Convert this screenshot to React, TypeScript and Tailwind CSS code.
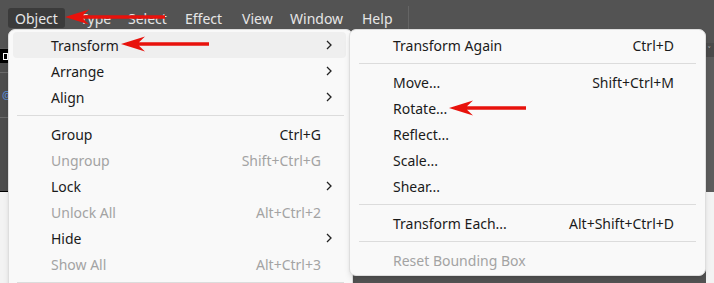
import React from "react"

type Item =
  | { sep: true }
  | { label: string; shortcut?: string; sub?: boolean; disabled?: boolean; active?: boolean; sep?: false }

const objectMenu: Item[] = [
  { label: "Transform", sub: true, active: true },
  { label: "Arrange", sub: true },
  { label: "Align", sub: true },
  { sep: true },
  { label: "Group", shortcut: "Ctrl+G" },
  { label: "Ungroup", shortcut: "Shift+Ctrl+G", disabled: true },
  { label: "Lock", sub: true },
  { label: "Unlock All", shortcut: "Alt+Ctrl+2", disabled: true },
  { label: "Hide", sub: true },
  { label: "Show All", shortcut: "Alt+Ctrl+3", disabled: true },
  { sep: true },
]

const transformMenu: Item[] = [
  { label: "Transform Again", shortcut: "Ctrl+D" },
  { sep: true },
  { label: "Move...", shortcut: "Shift+Ctrl+M" },
  { label: "Rotate..." },
  { label: "Reflect..." },
  { label: "Scale..." },
  { label: "Shear..." },
  { sep: true },
  { label: "Transform Each...", shortcut: "Alt+Shift+Ctrl+D" },
  { sep: true },
  { label: "Reset Bounding Box", disabled: true },
]

const menuBar = [
  { label: "Object", w: "w-[65px]", active: true },
  { label: "Type", w: "w-[48px]" },
  { label: "Select", w: "w-[57px]" },
  { label: "Effect", w: "w-[57px]" },
  { label: "View", w: "w-[48px]" },
  { label: "Window", w: "w-[72px]" },
  { label: "Help", w: "w-[53px]" },
]

function Chevron() {
  return (
    <svg width="6" height="10" viewBox="0 0 6 10" className="ml-auto">
      <path d="M1 1l4 4-4 4" fill="none" stroke="#222" strokeWidth="1.3" />
    </svg>
  )
}

// red annotation arrow, tip on the left
function RedArrow({ className, length }: { className: string; length: number }) {
  return (
    <svg className={`absolute z-20 ${className}`} width={length} height="16" viewBox={`0 0 ${length} 16`}>
      <path d={`M0 8 L24 0.5 L18 6.3 L${length} 6.3 L${length} 9.7 L18 9.7 L24 15.5 Z`} fill="#e8120c" />
    </svg>
  )
}

export default function App() {
  return (
    <div
      className="relative h-[283px] w-[714px] overflow-hidden bg-[#535353] text-[14px]"
      style={{ fontFamily: '"Noto Sans", "Open Sans", sans-serif' }}
    >
      {/* menu bar */}
      <div className="flex h-[29px] items-end pb-[1px] pl-2">
        {menuBar.map((m) => (
          <div key={m.label} className={`${m.w} flex`}>
            <span
              className={`flex h-[20px] items-center rounded-[3px] px-[7px] text-[#e6e6e6] ${
                m.active ? "bg-[#3b3b3b]" : ""
              }`}
            >
              {m.label}
            </span>
          </div>
        ))}
        <div className="mb-[-1px] h-[23px] w-px bg-[#656565]" />
      </div>

      <div className="flex items-start">
        {/* left strip of the workspace */}
        <div className="flex w-2 flex-col">
          <div className="h-[20px] border-b border-[#5e5e5e] bg-[#535353]" />
          <div className="flex h-[14px] items-center bg-black pl-[3px]">
            <div className="h-[7px] w-[6px] border border-white" />
          </div>
          <div className="h-[10px] border-b border-[#6a6a6a] bg-[#4d4d4d]" />
          <div className="flex h-[44px] items-center bg-[#4d4d4d] pl-[2px] text-[11px] text-[#5b8fd9]">@</div>
          <div className="h-[74px] border-t border-[#6a6a6a] bg-[#4d4d4d]" />
          <div className="h-px bg-black" />
          <div className="h-[100px] bg-[#f3f3f3]" />
        </div>

        {/* Object menu */}
        <div className="h-[270px] w-[345px] rounded-t-[7px] border border-[#dedede] bg-[#f9f9f9] pt-[2px] shadow-md">
          {objectMenu.map((it, i) =>
            it.sep ? (
              <div key={i} className="mx-[8px] my-[5px] h-px bg-[#dcdcdc]" />
            ) : (
              <div
                key={i}
                className={`ml-[4px] mr-[6px] flex h-[26px] items-center rounded-[4px] pl-[38px] pr-[14px] ${
                  it.active ? "bg-[#efefef]" : ""
                } ${it.disabled ? "text-[#a3a3a3]" : "text-[#1b1b1b]"}`}
              >
                <span className="flex-1">{it.label}</span>
                {it.shortcut && <span>{it.shortcut}</span>}
                <span className="flex w-[11px] justify-end">{it.sub && <Chevron />}</span>
              </div>
            )
          )}
        </div>

        {/* Transform submenu */}
        <div className="relative z-10 -ml-[4px] w-[357px] rounded-[7px] border border-[#dedede] bg-[#f9f9f9] py-[2px] shadow-md">
          {transformMenu.map((it, i) =>
            it.sep ? (
              <div key={i} className="mx-[9px] my-[5px] h-px bg-[#dcdcdc]" />
            ) : (
              <div
                key={i}
                className={`flex h-[26px] items-center pl-[43px] pr-[31px] ${
                  it.disabled ? "text-[#a3a3a3]" : "text-[#1b1b1b]"
                }`}
              >
                <span className="flex-1">{it.label}</span>
                {it.shortcut && <span>{it.shortcut}</span>}
              </div>
            )
          )}
        </div>

        {/* right strip of the workspace */}
        <div className="flex flex-1 flex-col">
          <div className="h-[14px] bg-[#535353]" />
          <div className="flex h-[14px] items-center bg-[#4a4a4a] pl-[2px] text-[9px] text-[#cfcfcf]">˅</div>
          <div className="h-[135px] bg-[#5c5c5c]" />
          <div className="h-[100px] bg-[#f3f3f3]" />
        </div>
      </div>

      {/* red arrows over the menus */}
      <RedArrow className="left-[65px] top-[9px]" length={100} />
      <RedArrow className="left-[121px] top-[36px]" length={88} />
      <RedArrow className="left-[449px] top-[100px]" length={77} />
    </div>
  )
}
